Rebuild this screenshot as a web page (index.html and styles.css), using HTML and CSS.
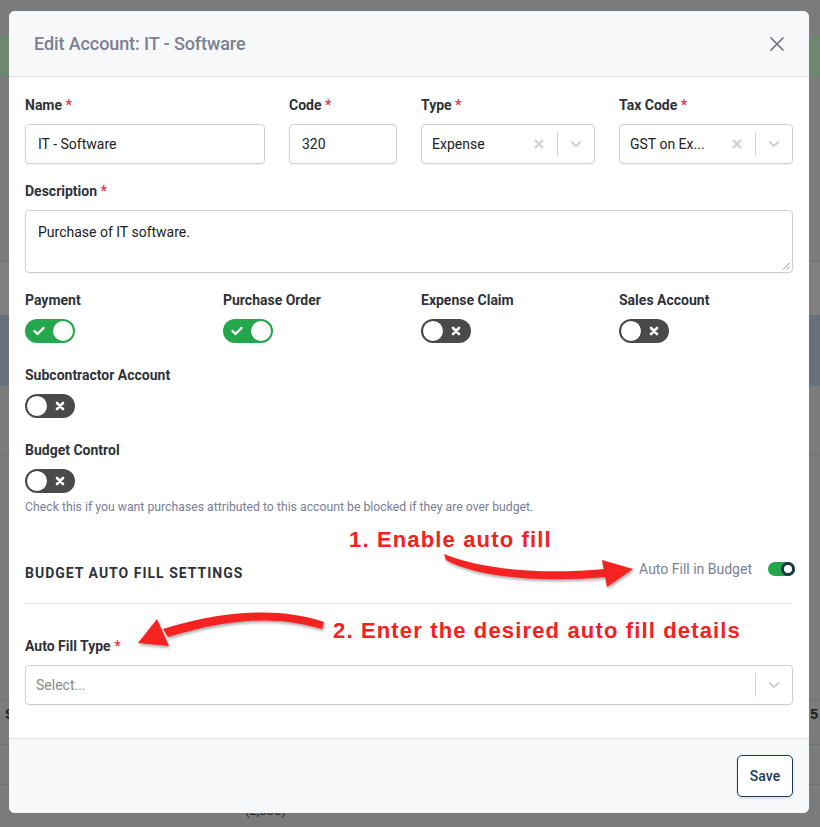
FILE: index.html
```html
<!DOCTYPE html>
<html lang="en">
<head>
<meta charset="utf-8">
<title>Edit Account</title>
<link rel="stylesheet" href="styles.css">
</head>
<body>
<div class="backdrop">
  <div class="band band-top"></div>
  <div class="band band-green"></div>
  <div class="band band-gray1"></div>
  <div class="band band-light"></div>
  <div class="band band-blue"></div>
  <div class="band band-gray2"></div>
  <div class="band band-row"></div>
  <div class="band band-row2"><span class="bg-s">S</span><span class="bg-5">5</span></div>
  <div class="band band-row3"></div>
  <div class="band band-row4"><span class="bg-num">(2,000)</span></div>
</div>

<div class="modal">
  <div class="modal-header">
    <h2 class="modal-title">Edit Account: IT - Software</h2>
    <svg class="close" width="16" height="16" viewBox="0 0 16 16"><path d="M1.5 1.5 L14.5 14.5 M14.5 1.5 L1.5 14.5" stroke="#6b6f78" stroke-width="1.6" fill="none"/></svg>
  </div>

  <div class="modal-body">
    <div class="row row-4">
      <div class="field">
        <div class="label">Name <span class="req">*</span></div>
        <div class="input">IT - Software</div>
      </div>
      <div class="field">
        <div class="label">Code <span class="req">*</span></div>
        <div class="input">320</div>
      </div>
      <div class="field">
        <div class="label">Type <span class="req">*</span></div>
        <div class="select">
          <span class="select-value">Expense</span>
          <svg class="clear" width="10" height="10" viewBox="0 0 10 10"><path d="M1 1 L9 9 M9 1 L1 9" stroke="#cfcfcf" stroke-width="2.2" fill="none"/></svg>
          <span class="sep"></span>
          <svg class="chev" width="12" height="8" viewBox="0 0 12 8"><path d="M1 1.5 L6 6 L11 1.5" stroke="#cfcfcf" stroke-width="1.8" fill="none"/></svg>
        </div>
      </div>
      <div class="field">
        <div class="label">Tax Code <span class="req">*</span></div>
        <div class="select">
          <span class="select-value">GST on Ex...</span>
          <svg class="clear" width="10" height="10" viewBox="0 0 10 10"><path d="M1 1 L9 9 M9 1 L1 9" stroke="#cfcfcf" stroke-width="2.2" fill="none"/></svg>
          <span class="sep"></span>
          <svg class="chev" width="12" height="8" viewBox="0 0 12 8"><path d="M1 1.5 L6 6 L11 1.5" stroke="#cfcfcf" stroke-width="1.8" fill="none"/></svg>
        </div>
      </div>
    </div>

    <div class="field field-desc">
      <div class="label">Description <span class="req">*</span></div>
      <div class="textarea">Purchase of IT software.
        <svg class="grip" width="8" height="8" viewBox="0 0 8 8"><path d="M7.5 1 L1 7.5 M7.5 4.5 L4.5 7.5" stroke="#8a8a8a" stroke-width="1" fill="none"/></svg>
      </div>
    </div>

    <div class="row row-toggles">
      <div class="field">
        <div class="label">Payment</div>
        <span class="switch on"><svg class="sw-ico" width="12" height="10" viewBox="0 0 12 10"><path d="M1.5 5 L4.5 8 L10.5 2" stroke="#fff" stroke-width="2.4" fill="none" stroke-linecap="round" stroke-linejoin="round"/></svg><span class="knob"></span></span>
      </div>
      <div class="field">
        <div class="label">Purchase Order</div>
        <span class="switch on"><svg class="sw-ico" width="12" height="10" viewBox="0 0 12 10"><path d="M1.5 5 L4.5 8 L10.5 2" stroke="#fff" stroke-width="2.4" fill="none" stroke-linecap="round" stroke-linejoin="round"/></svg><span class="knob"></span></span>
      </div>
      <div class="field">
        <div class="label">Expense Claim</div>
        <span class="switch off"><span class="knob"></span><svg class="sw-ico" width="10" height="10" viewBox="0 0 10 10"><path d="M2 2 L8 8 M8 2 L2 8" stroke="#fff" stroke-width="2.6" fill="none" stroke-linecap="round"/></svg></span>
      </div>
      <div class="field">
        <div class="label">Sales Account</div>
        <span class="switch off"><span class="knob"></span><svg class="sw-ico" width="10" height="10" viewBox="0 0 10 10"><path d="M2 2 L8 8 M8 2 L2 8" stroke="#fff" stroke-width="2.6" fill="none" stroke-linecap="round"/></svg></span>
      </div>
    </div>

    <div class="field field-toggle">
      <div class="label">Subcontractor Account</div>
      <span class="switch off"><span class="knob"></span><svg class="sw-ico" width="10" height="10" viewBox="0 0 10 10"><path d="M2 2 L8 8 M8 2 L2 8" stroke="#fff" stroke-width="2.6" fill="none" stroke-linecap="round"/></svg></span>
    </div>

    <div class="field field-toggle">
      <div class="label">Budget Control</div>
      <span class="switch off"><span class="knob"></span><svg class="sw-ico" width="10" height="10" viewBox="0 0 10 10"><path d="M2 2 L8 8 M8 2 L2 8" stroke="#fff" stroke-width="2.6" fill="none" stroke-linecap="round"/></svg></span>
      <div class="help">Check this if you want purchases attributed to this account be blocked if they are over budget.</div>
    </div>

    <div class="section-head">
      <div class="section-title">BUDGET AUTO FILL SETTINGS</div>
      <div class="section-right">
        <span class="muted">Auto Fill in Budget</span>
        <span class="mini-switch"><span class="mini-knob"></span></span>
      </div>
    </div>

    <div class="field field-autofill">
      <div class="label">Auto Fill Type <span class="req">*</span></div>
      <div class="select select-wide">
        <span class="select-value placeholder">Select...</span>
        <span class="sep"></span>
        <svg class="chev" width="12" height="8" viewBox="0 0 12 8"><path d="M1 1.5 L6 6 L11 1.5" stroke="#cfcfcf" stroke-width="1.8" fill="none"/></svg>
      </div>
    </div>
  </div>

  <div class="modal-footer">
    <button class="btn-save">Save</button>
  </div>
</div>

<svg class="arrows" width="820" height="827" viewBox="0 0 820 827">
  <defs>
    <filter id="sh" x="-20%" y="-50%" width="140%" height="200%">
      <feDropShadow dx="1" dy="2" stdDeviation="1.5" flood-color="#000" flood-opacity="0.35"/>
    </filter>
  </defs>
  <g filter="url(#sh)" fill="#f52020">
    <path d="M444 554 C 480 569, 540 575, 605 569 L 606 577 C 540 583, 476 577, 446 560 Z"/>
    <polygon points="602,560 633,569 607,587"/>
    <path d="M324 622 C 282 608, 228 609, 163 629 L 168 637 C 232 617, 280 616, 322 629 Z"/>
    <polygon points="157,619 138,643 169,646"/>
  </g>
</svg>
<div class="note note-1">1. Enable auto fill</div>
<div class="note note-2">2. Enter the desired auto fill details</div>
</body>
</html>
```

FILE: styles.css
```css
* { box-sizing: border-box; }
html, body { margin: 0; padding: 0; }
body {
  width: 820px;
  height: 827px;
  overflow: hidden;
  background: #7b7b7b;
  font-family: Roboto, "Liberation Sans", Arial, sans-serif;
  position: relative;
}

/* dimmed page behind the modal */
.backdrop { display: flex; flex-direction: column; }
.band { width: 100%; position: relative; }
.band-top { height: 35px; background: #7b7b7b; }
.band-green { height: 42px; background: #6d8771; }
.band-gray1 { height: 185px; background: #7b7b7b; border-bottom: 1px solid #737373; }
.band-light { height: 53px; background: #808080; }
.band-blue { height: 71px; background: #66717c; }
.band-gray2 { height: 69px; background: #7b7b7b; border-bottom: 1px solid #727272; }
.band-row { height: 245px; background: #7b7b7b; border-bottom: 1px solid #707070; }
.band-row2 { height: 45px; background: #7b7b7b; border-bottom: 1px solid #707070; }
.band-row3 { height: 40px; background: #7b7b7b; border-bottom: 1px solid #707070; }
.band-row4 { height: 42px; background: #7b7b7b; }
.bg-s, .bg-5 {
  position: absolute; top: 6px;
  font: bold 14px "Liberation Sans", Arial, sans-serif; color: #1e1e1e;
}
.bg-s { left: 5px; }
.bg-5 { right: 2px; }
.bg-num {
  position: absolute; left: 245px; top: 18px;
  font: 13px Roboto, sans-serif; color: #2a2a2a;
}

/* modal */
.modal {
  position: absolute;
  left: 9px; top: 11px;
  width: 800px;
  background: #fff;
  border-radius: 6px;
  overflow: hidden;
}
.modal-header {
  height: 66px;
  background: #f7f8fa;
  border-bottom: 1px solid #dfe2e7;
  display: flex;
  align-items: center;
  justify-content: space-between;
  padding: 0 24px 0 25px;
}
.modal-title {
  margin: 0;
  font-size: 18px;
  font-weight: 500;
  color: #7a8092;
  letter-spacing: -0.1px;
}
.close { display: block; }

.modal-body { padding: 18px 16px 33px; }

.label {
  font-size: 14px;
  font-weight: 700;
  line-height: 20px;
  color: #2f3339;
  margin-bottom: 9px;
}
.req { color: #e5344a; font-weight: 700; }

.row { display: grid; column-gap: 24px; }
.row-4 { grid-template-columns: 240px 108px 174px 174px; margin-bottom: 17px; }
.row-toggles { grid-template-columns: repeat(4, 174px); margin-bottom: 22px; }

.input, .select, .textarea {
  border: 1px solid #cdd1d6;
  border-radius: 4px;
  background: #fff;
  font-size: 14px;
  color: #222;
  box-shadow: 0 1px 2px rgba(0,0,0,0.06);
}
.input {
  height: 40px;
  display: flex;
  align-items: center;
  padding: 0 12px;
}
.select {
  height: 40px;
  display: flex;
  align-items: center;
  padding: 0 10px 0 10px;
}
.select-value {
  flex: 1;
  min-width: 0;
  white-space: nowrap;
  overflow: hidden;
  padding-right: 8px;
}
.placeholder { color: #8a8a8a; }
.clear { flex: none; margin-right: 13px; }
.sep { width: 1px; height: 24px; background: #d4d4d4; flex: none; }
.chev { flex: none; margin-left: 12px; margin-right: 2px; }

.field-desc { margin-bottom: 17px; }
.textarea {
  height: 63px;
  padding: 12px 12px;
  line-height: 18px;
  position: relative;
}
.grip { position: absolute; right: 2px; bottom: 2px; }

/* toggles */
.switch {
  display: flex;
  align-items: center;
  width: 50px;
  height: 24px;
  border-radius: 12px;
  position: relative;
}
.switch.on { background: #23a64c; justify-content: space-between; padding: 0 2px 0 8px; }
.switch.off { background: #4a4a4a; justify-content: space-between; padding: 0 10px 0 1px; }
.switch .knob {
  width: 20px; height: 20px; border-radius: 50%;
  background: #fff;
  display: block;
}
.switch.off .knob { width: 22px; height: 22px; border: 1px solid #3b3b3b; }
.sw-ico { display: block; }

.field-toggle { margin-bottom: 22px; }
.help {
  margin-top: 5px;
  font-size: 12.25px;
  line-height: 18px;
  color: #7a8096;
}

/* section */
.section-head {
  display: flex;
  justify-content: space-between;
  align-items: flex-start;
  margin-top: 39px;
  padding-bottom: 20px;
  border-bottom: 1px solid #e3e5e8;
}
.section-title {
  margin-top: 8px;
  font-size: 14px;
  font-weight: 700;
  line-height: 20px;
  letter-spacing: 1px;
  color: #2f3339;
}
.section-right {
  margin-top: 4px;
  display: flex;
  align-items: center;
  height: 20px;
}
.muted { font-size: 14px; color: #7a8096; }
.mini-switch {
  margin-left: 16px;
  margin-right: -2px;
  width: 27px; height: 14px;
  border-radius: 7px;
  background: #23a64c;
  display: flex;
  align-items: center;
  justify-content: flex-end;
}
.mini-knob {
  width: 14px; height: 14px;
  border-radius: 50%;
  background: #fff;
  border: 3px solid #1c3547;
}
.field-autofill { margin-top: 32px; }
.select-wide { padding-left: 10px; }

.modal-footer {
  background: #f7f8fa;
  border-top: 1px solid #dfe2e7;
  padding: 16px 16px 16px;
  display: flex;
  justify-content: flex-end;
}
.btn-save {
  width: 56px;
  height: 42px;
  border: 1.5px solid #1b3a55;
  border-radius: 5px;
  background: #fff;
  color: #1b3a55;
  font-family: Roboto, sans-serif;
  font-size: 14px;
  font-weight: 500;
  box-shadow: 0 1px 3px rgba(0,0,0,0.15);
}

/* annotations */
.arrows { position: absolute; left: 0; top: 0; pointer-events: none; }
.note {
  position: absolute;
  font-family: "Liberation Sans", Arial, sans-serif;
  font-weight: 700;
  font-size: 22px;
  line-height: 26px;
  letter-spacing: 1.15px;
  color: #f52020;
  white-space: nowrap;
}
.note-1 { left: 349px; top: 527px; }
.note-2 { left: 333px; top: 618px; }
```
